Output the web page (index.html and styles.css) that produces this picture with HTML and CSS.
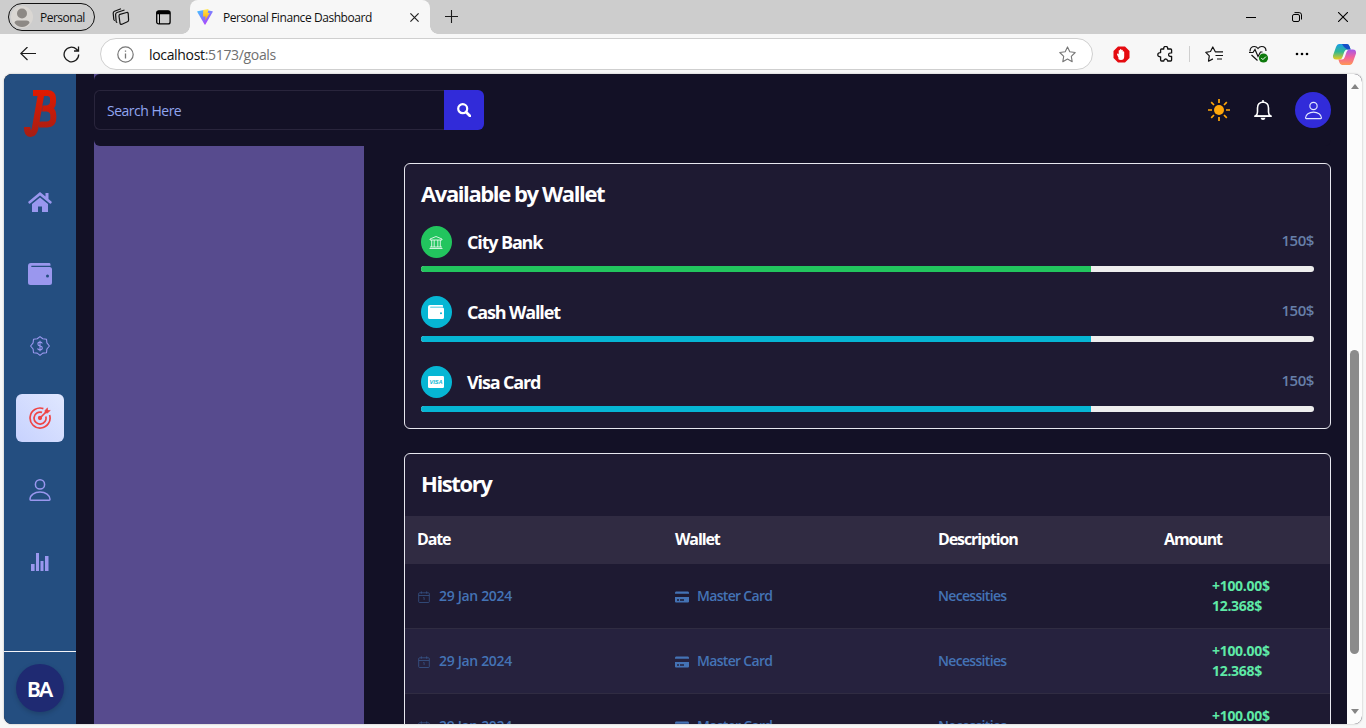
FILE: index.html
```html
<!DOCTYPE html>
<html lang="en">
<head>
<meta charset="utf-8">
<title>Personal Finance Dashboard</title>
<link rel="stylesheet" href="styles.css">
</head>
<body>
<svg class="defs" width="0" height="0">
  <defs>
    <symbol id="person" viewBox="0 0 24 24"><g fill="none" stroke="currentColor" stroke-width="1.500"><circle cx="12" cy="6.400" r="4.600"/><path d="M2.800 22.200c-.5 0-.8-.4-.8-.9 0-4 4.500-7.300 10-7.300s10 3.300 10 7.300c0 .5-.3.900-.8.900z"/></g></symbol>
    <symbol id="wallet" viewBox="0 0 24 22"><path fill="currentColor" fill-rule="evenodd" d="M3 0h18.500q1 0 1 1.500v1.200H3.500q-.6.600 0 1.200H22q2 .2 2 2.200V19.500q0 2.500-2.500 2.500H2.500Q0 22 0 19.500V3Q0 0 3 0zM19.500 11.500a1.500 1.500 0 1 0 0 3 1.500 1.500 0 0 0 0-3z"/></symbol>
    <symbol id="calendar" viewBox="0 0 12 12"><path fill="none" stroke="currentColor" stroke-width=".8" d="M1.500 1.800h9q.8 0 .8.800v8q0 .9-.8.900h-9q-.8 0-.8-.9v-8q0-.8.800-.8zM.7 4.500h10.600M3.300.3v2.400M8.700.3v2.400M5.400 6.500h.7v2.400"/></symbol>
    <symbol id="card" viewBox="0 0 14 12"><path fill="currentColor" fill-rule="evenodd" d="M1 .5h12q1 0 1 1.500v.8H0V2Q0 .5 1 .5zM0 6h14v4.500q0 1-1 1H1q-1 0-1-1zM2 8.300v1.500h2V8.300zm3 0v1.500h4V8.300z"/></symbol>
  </defs>
</svg>

<div class="browser">
  <div class="tabstrip">
    <div class="profile">
      <svg width="22" height="22" viewBox="0 0 22 22"><circle cx="11" cy="11" r="11" fill="#dad7d3"/><circle cx="11" cy="7.500" r="5" fill="#8d8985"/><path d="M3.500 17q0-2.500 3-2.500h9q3 0 3 2.500-3 4-7.500 4t-7.500-4z" fill="#8d8985"/></svg>
      <span>Personal</span>
    </div>
    <svg class="workspaces" width="18" height="18" viewBox="0 0 18 18" fill="none" stroke="#111" stroke-width="1.200"><path d="M8 6.300 14.600 4.500q1.300-.3 1.600.9l.4 6.600q0 1.300-1.200 1.700l-5.400 2.500q-1.800.5-2-1L7 8q0-1.300 1-1.700zM5.300 14.500q-1 0-1.200-1.200L3.600 6.500q0-1.500 1.400-2L12.500 2M3 12.500q-1 0-1.200-1L1.200 5.300q0-1.400 1.300-2L9 .8"/></svg>
    <svg class="tabmenu" width="15" height="15" viewBox="0 0 15 15"><rect x=".7" y=".9" width="13.400" height="13" rx="2" fill="none" stroke="#000" stroke-width="1.300"/><path d="M.7 4.300V2.700Q.7.700 2.700.7h9.400q2 0 2 2v1.600z"/><path d="M3.500 4v10" stroke="#000" stroke-width="1"/></svg>
    <div class="tab">
      <svg width="16" height="16" viewBox="0 0 16 16"><defs><linearGradient id="v1" x1="0" y1="0" x2=".7" y2="1"><stop stop-color="#41c7ff"/><stop offset="1" stop-color="#b638fd"/></linearGradient><linearGradient id="v2" x1="0" y1="0" x2="0" y2="1"><stop stop-color="#ffe64d"/><stop offset="1" stop-color="#ffa800"/></linearGradient></defs><path d="M.5 2.200 7 1h2l6.500 1.200q.5.300.2.900L8.400 15.500q-.4.500-.8 0L.3 3.100Q0 2.400.5 2.200z" fill="url(#v1)"/><path d="M6.200 1 11.500 0 10.700 4h2L8.200 11.500 8.600 7.500H6z" fill="url(#v2)"/></svg>
      <span class="tabtitle">Personal Finance Dashboard</span>
      <svg class="tabclose" width="9" height="9" viewBox="0 0 9 9"><path d="M.4.4l8.200 8.200M8.600.4.400 8.600" stroke="#222" stroke-width="1.200"/></svg>
    </div>
    <svg class="newtab" width="14" height="14" viewBox="0 0 14 14"><path d="M6.500 0v13M0 6.500h13" stroke="#1b1b1b" stroke-width="1.100"/></svg>
    <div class="winbuttons">
      <svg width="10" height="10" viewBox="0 0 10 10"><path d="M0 5.500h10" stroke="#000"/></svg>
      <svg width="10" height="10" viewBox="0 0 10 10" fill="none" stroke="#000"><rect x=".5" y="2.500" width="7" height="7" rx="1.500"/><path d="M2.500.6H7.200q2.300 0 2.300 2.300v4.600"/></svg>
      <svg width="10" height="10" viewBox="0 0 10 10"><path d="M0 0l10 10M10 0 0 10" stroke="#000" stroke-width="1.100"/></svg>
    </div>
  </div>

  <div class="toolbar">
    <svg class="back" width="16" height="14" viewBox="0 0 16 14" fill="none" stroke="#1b1b1b" stroke-width="1.200"><path d="M16 6.500H1M7.500 0 .8 6.500l6.700 6.500"/></svg>
    <svg class="reload" width="17" height="17" viewBox="0 0 17 17" fill="none" stroke="#1b1b1b" stroke-width="1.300"><path d="M15.700 8.500A7.300 7.300 0 1 1 13.500 3.300L15.300 5M15.500.5V5H11"/></svg>
    <div class="address">
      <svg width="17" height="17" viewBox="0 0 17 17"><circle cx="8.500" cy="8.500" r="7.700" fill="none" stroke="#777" stroke-width="1.200"/><path d="M8.500 7.500v5M8.500 4.500v1.300" stroke="#777" stroke-width="1.300"/></svg>
      <span class="url"><b>localhost</b>:5173/goals</span>
      <svg class="star" width="17" height="17" viewBox="0 0 17 17" fill="none" stroke="#777" stroke-width="1.100" stroke-linejoin="round"><path d="M8.500.9l2.300 4.900 5.400.7-3.900 3.800.9 5.400-4.700-2.600-4.700 2.600.9-5.400L.8 6.500l5.400-.7z"/></svg>
    </div>
    <div class="actions">
      <svg class="adblock" width="17" height="17" viewBox="0 0 17 17"><path d="M5 .5h7L16.500 5v7L12 16.500H5L.5 12V5z" fill="#e50b10"/><path d="M4 8.500q0-1 .7-1t1 1V4.800q.1-.9.700-.9t.6.900V3.900q0-.9.700-.9t.7.900v.7q0-.9.700-.9t.7.900v1.600q0-.9.700-.9t.7.900V10.500q0 3.500-3.200 3.500T5.500 11.800z" fill="#fff"/></svg>
      <svg class="puzzle" width="17" height="17" viewBox="0 0 17 17" fill="none" stroke="#111" stroke-width="1.300" stroke-linejoin="round"><path d="M6.800 3a2 2 0 1 1 3.800 0h3q1 0 1 1v2.900q-3-.2-3 1.800t3 1.800V14q0 1-1 1h-3q-.2-2-1.900-2t-1.900 2H4.600q-1 0-1-1v-3.200q-2.800 0-2.800-2.100t2.800-2.100V4q0-1 1-1z"/></svg>
      <i class="divider"></i>
      <svg class="favs" width="18" height="17" viewBox="0 0 18 17" fill="none" stroke="#111" stroke-width="1.200" stroke-linejoin="round"><path d="M14 5.800h-3.700L7.800 1 5.500 5.500.8 6.300l3.500 3.500-.8 5.400 4.400-2.300M11.500 5.800H18M10.500 9.500H18M12 13h5"/></svg>
      <svg class="health" width="20" height="18" viewBox="0 0 20 18"><path d="M1 6.500Q1 1.500 5.500 1.500 7.500 1.500 9 3.500 10.500 1.500 12.700 1.500 17 1.500 17 6M0 7.500h4l2-3 3 7 2.500-4.500h2M2.500 10l6 5.500" fill="none" stroke="#111" stroke-width="1.200"/><circle cx="14.500" cy="13" r="4.600" fill="#0e7a0d"/><path d="M12.300 13l1.600 1.600 3-3" fill="none" stroke="#fff"/></svg>
      <svg class="dots" width="14" height="4" viewBox="0 0 14 4"><circle cx="2" cy="2" r="1.300"/><circle cx="7" cy="2" r="1.300"/><circle cx="12" cy="2" r="1.300"/></svg>
      <svg class="copilot" width="23" height="21" viewBox="0 0 23 21"><defs><linearGradient id="c1" x1="0" y1="0" x2="0" y2="1"><stop stop-color="#1b9de8"/><stop offset=".5" stop-color="#31b891"/><stop offset="1" stop-color="#eccb1c"/></linearGradient><linearGradient id="c2" x1="0" y1="0" x2="0" y2="1"><stop stop-color="#a458ea"/><stop offset=".5" stop-color="#f2629c"/><stop offset="1" stop-color="#ff9754"/></linearGradient></defs><path d="M6 0h8q2 0 2.800 3l.8 2.500H14q-2 0-2.800 2.500L9.500 13q-.8 2.500-3 2.500H3q-3.500 0-3-4L3 3Q4 0 6 0z" fill="url(#c1)"/><path d="M9 0h5q2 0 2.800 3l.8 2.500H14L11 3z" fill="#164fc7"/><path d="M17 21H9q-2 0-2.800-3l-.8-2.500H9q2 0 2.800-2.500L13.500 8q.8-2.500 3-2.500H20q3.500 0 3 4L20 18q-1 3-3 3z" fill="url(#c2)"/></svg>
    </div>
  </div>

  <div class="viewport">
    <aside class="sidebar">
      <svg class="logo" width="36" height="50" viewBox="0 0 36 50"><defs><linearGradient id="red" gradientUnits="userSpaceOnUse" x1="0" y1="0" x2="0" y2="48"><stop stop-color="#e21a00"/><stop offset="1" stop-color="#a51e14"/></linearGradient></defs><g fill="none" stroke="url(#red)"><path stroke-width="6" d="M9 4H23.500Q29 4.500 29 9.500V13Q29 18.500 23 19.500H17M23 19.500Q29.300 20.500 29.300 26V29.500Q29.300 35 23 35.500H15"/><path stroke-width="6.500" d="M17 6 11.700 36Q10.500 45 6.500 44.800 3 44.500 3.200 38"/></g><path d="M20.500 7 16.200 33" stroke="#244e80" stroke-width=".6" opacity=".6"/></svg>
      <nav>
        <a><svg width="24" height="20" viewBox="0 0 24 20" fill="currentColor"><path d="M12 0 17.500 4.500V1H20.500V7L23.700 9.700Q24 10.600 23 11.500 22.300 12 21.500 11.300L12 3.500 2.500 11.300Q1.700 12 1 11.500 0 10.600.3 9.700z"/><path d="M4 12l8-6.500 8 6.500v8h-6v-5.500h-4V20H4z"/></svg></a>
        <a><svg width="24" height="22"><use href="#wallet"/></svg></a>
        <a><svg width="20" height="20" viewBox="0 0 20 20" fill="none" stroke="currentColor" stroke-width="1.100" stroke-linejoin="round"><path d="M10 .6l2.800 2.200 3.700.4.400 3.700L19.400 10l-2.500 3-.4 3.700-3.700.4L10 19.400l-2.800-2.300-3.700-.4-.4-3.700L.6 10l2.500-3.100.4-3.700 3.700-.4z"/><path d="M12.300 7.500q-.3-1.400-2.300-1.400-2.100 0-2.100 1.800T10 10q2.300.3 2.300 2T10 13.900q-2.200 0-2.400-1.500M10 4.700v10.600"/></svg></a>
        <a class="active"><svg width="22" height="22" viewBox="0 0 22 22" fill="none" stroke="currentColor" stroke-width="1.700"><path d="M14.400 1.600A10 10 0 1 0 20.600 8M13 5.400A6 6 0 1 0 16.800 9.400"/><circle cx="11" cy="11" r="1.300" fill="currentColor"/><path d="M11 11l8-8"/><path d="M16 3.500 18.500.8V3.500H21.300L18.500 6H16z" fill="currentColor" stroke-width=".6"/></svg></a>
        <a><svg width="24" height="24"><use href="#person"/></svg></a>
        <a><svg width="18" height="18" viewBox="0 0 18 18" fill="currentColor"><path d="M0 11h3.600v7H0zM5 0h3v18H5zM9.500 8h3v10h-3zM14 3h3.500v15H14z"/></svg></a>
      </nav>
      <div class="account"><span>BA</span></div>
    </aside>

    <main class="main">
      <div class="topwrap">
      <header class="topbar">
        <div class="search"><span class="field">Search Here</span><span class="searchbtn"><svg width="14" height="14" viewBox="0 0 14 14" fill="none" stroke="#fff"><circle cx="5.700" cy="5.700" r="4.500" stroke-width="2.200"/><path d="M9 9l4 4" stroke-width="2.700" stroke-linecap="round"/></svg></span></div>
        <div class="tools">
          <svg width="22" height="22" viewBox="0 0 22 22"><circle cx="11" cy="11" r="5" fill="#ffa70b"/><path d="M11 0v4M11 18v4M0 11h4M18 11h4M3.200 3.200 6 6M16 16l2.800 2.800M3.200 18.800 6 16M16 6l2.800-2.800" stroke="#ffa70b" stroke-width="1.700"/></svg>
          <svg width="18" height="20" viewBox="0 0 18 20"><path d="M1.500 16q2-1.500 2-4V8q0-5.500 5.500-6 5.500.5 5.500 6v4q0 2.500 2 4z" fill="none" stroke="#fff" stroke-width="1.600" stroke-linejoin="round"/><path d="M9 0v2.500M.2 16.200h17.600" stroke="#fff" stroke-width="1.500"/><path d="M6.500 17.700h5Q11 20 9 20t-2.500-2.300z" fill="#fff"/></svg>
          <span class="avatar"><svg width="19" height="19"><use href="#person"/></svg></span>
        </div>
      </header>
      </div>
      <div class="columns">
        <div class="goalpanel"></div>
        <div class="content">
          <section class="panel wallets">
            <h2>Available by Wallet</h2>
            <div class="wallet green"><div class="line"><span class="badge"><svg width="14" height="13" viewBox="0 0 14 13" fill="none" stroke="currentColor" stroke-width=".8"><path d="M1 4V3l6-2.500L13 3v1zM2.700 4v7M5.200 4v7M8.800 4v7M11.300 4v7M1 11h12M.5 12.500h13"/></svg></span><span class="name">City Bank</span><span class="sum">150$</span></div><div class="track"><i></i></div></div>
            <div class="wallet"><div class="line"><span class="badge"><svg width="16" height="14" viewBox="0 0 24 22" preserveAspectRatio="none"><use href="#wallet" width="24" height="22"/></svg></span><span class="name">Cash Wallet</span><span class="sum">150$</span></div><div class="track"><i></i></div></div>
            <div class="wallet"><div class="line"><span class="badge"><svg width="16" height="12" viewBox="0 0 16 12"><rect width="16" height="12" rx="1.200" fill="#fff"/><text x="1.500" y="8.200" class="visa" textLength="13" lengthAdjust="spacingAndGlyphs">VISA</text></svg></span><span class="name">Visa Card</span><span class="sum">150$</span></div><div class="track"><i></i></div></div>
          </section>
          <section class="panel history">
            <h2>History</h2>
            <div class="row head"><span>Date</span><span>Wallet</span><span>Description</span><span class="amt">Amount</span></div>
            <div class="row"><span class="date"><svg width="12" height="12"><use href="#calendar"/></svg><em>29 Jan 2024</em></span><span class="via"><svg width="14" height="12"><use href="#card"/></svg><em>Master Card</em></span><em>Necessities</em><span class="money">+100.00$<br>12.368$</span></div>
            <div class="row alt"><span class="date"><svg width="12" height="12"><use href="#calendar"/></svg><em>29 Jan 2024</em></span><span class="via"><svg width="14" height="12"><use href="#card"/></svg><em>Master Card</em></span><em>Necessities</em><span class="money">+100.00$<br>12.368$</span></div>
            <div class="row"><span class="date"><svg width="12" height="12"><use href="#calendar"/></svg><em>29 Jan 2024</em></span><span class="via"><svg width="14" height="12"><use href="#card"/></svg><em>Master Card</em></span><em>Necessities</em><span class="money">+100.00$<br>12.368$</span></div>
          </section>
        </div>
      </div>
    </main>
    <div class="scrollbar"><i class="up"></i><i class="thumb"></i><i class="down"></i></div>
  </div>
</div>
</body>
</html>
```
FILE: styles.css
```css
* { box-sizing: border-box; }
body { margin: 0; overflow: hidden; font-family: "Open Sans", "Noto Sans", sans-serif; }
svg { display: block; flex: none; }
.defs { display: none; }
.browser { width: 1366px; height: 728px; background: #f7f7f7; overflow: hidden; display: flex; flex-direction: column; }

/* Tab strip */
.tabstrip { height: 34px; background: #cdcdcd; display: flex; align-items: center; flex: none; }
.profile { margin-left: 8px; width: 87px; height: 28px; border: 1px solid #111; border-radius: 14px; display: flex; align-items: center; gap: 7px; padding-left: 2px; font-size: 12px; letter-spacing: -.5px; color: #111; }
.workspaces { margin-left: 17px; }
.tabmenu { margin-left: 26px; }
.tab { margin-left: 19px; width: 240px; height: 34px; background: #f7f7f7; border-radius: 8px 8px 0 0; display: flex; align-items: center; padding-left: 7px; position: relative; }
.tab::before, .tab::after { content: ""; position: absolute; bottom: 0; width: 8px; height: 8px; }
.tab::before { left: -8px; background: radial-gradient(circle at 0 0, #cdcdcd 7.5px, #f7f7f7 8px); }
.tab::after { right: -8px; background: radial-gradient(circle at 100% 0, #cdcdcd 7.5px, #f7f7f7 8px); }
.tabtitle { margin-left: 10px; width: 187px; font-size: 12px; letter-spacing: -.43px; white-space: nowrap; color: #111; }
.newtab { margin-left: 15px; }
.winbuttons { margin-left: auto; margin-right: 18px; display: flex; gap: 36px; }

/* Toolbar */
.toolbar { height: 40px; display: flex; align-items: center; flex: none; }
.back { margin-left: 20px; }
.reload { margin-left: 27px; }
.address { margin-left: 20px; width: 993px; height: 32px; border: 1px solid #cfcfcf; border-radius: 16px; background: #fff; display: flex; align-items: center; padding: 0 16px; }
.url { margin-left: 15px; font-size: 14px; letter-spacing: -.33px; color: #707070; }
.url b { font-weight: 400; color: #111; }
.star { margin-left: auto; }
.actions { display: flex; align-items: center; flex: 1; }
.adblock { margin-left: 20px; }
.puzzle { margin-left: 27px; }
.divider { width: 1px; height: 16px; background: #cfcfcf; margin-left: 15px; }
.favs { margin-left: 15px; }
.health { margin-left: 26px; }
.dots { margin-left: 26px; }
.copilot { margin-left: 24px; }

/* Page */
.viewport { margin: 0 4px; height: 650px; border-radius: 8px; overflow: hidden; background: #131126; display: flex; flex: none; box-shadow: 0 0 2px #aaa; }
.sidebar { width: 72px; background: #244e80; display: flex; flex-direction: column; flex: none; }
.logo { margin: 15px 0 0 20px; overflow: visible; }
nav { margin-top: 39px; display: flex; flex-direction: column; align-items: center; gap: 24px; }
nav a { width: 48px; height: 48px; border-radius: 6px; display: flex; align-items: center; justify-content: center; color: #9a97ee; }
.active { color: #ef4444; background: linear-gradient(45deg, #c7d2fe, #e0e7ff); }
.account { margin-top: auto; height: 73px; border-top: 1px solid #f4f4f8; padding: 12px; }
.account span { width: 48px; height: 48px; border-radius: 50%; background: #1f2a72; color: #fff; display: flex; align-items: center; justify-content: center; font: 900 20px Lato, sans-serif; letter-spacing: -1.2px; padding: 1px 1px 0 0; box-shadow: 0 2px 5px rgba(0,0,0,.18); }

.main { width: 1271px; padding-left: 18px; flex: none; }
.topwrap { background: linear-gradient(90deg, #574b8e 20px, #131126 20px); }
.topbar { height: 72px; width: 1237px; border-radius: 6px; background: #131126; display: flex; align-items: center; }
.search { display: flex; width: 390px; height: 40px; }
.field { flex: 1; border: 1px solid #29253c; border-right: 0; border-radius: 6px 0 0 6px; padding: 0 12px; font-size: 14px; line-height: 40px; letter-spacing: -.5px; color: #91a5f0; }
.searchbtn { width: 40px; border-radius: 0 6px 6px 0; background: #312bd9; display: flex; align-items: center; justify-content: center; }
.tools { margin-left: auto; display: flex; align-items: center; }
.tools > svg + svg { margin-left: 24px; }
.avatar { margin-left: 23px; width: 36px; height: 36px; border-radius: 50%; background: #312bd9; color: #e0e7ff; display: flex; align-items: center; justify-content: center; }

.columns { display: flex; gap: 40px; height: 578px; }
.goalpanel { width: 270px; background: #574b8e; }
.content { width: 927px; padding-top: 17px; display: flex; flex-direction: column; gap: 24px; }
.panel { border: 1px solid #e7e7ef; border-radius: 6px; background: #1e1a32; flex: none; }
h2 { margin: 0; font-size: 22px; line-height: 27px; height: 30px; font-weight: 700; letter-spacing: -1.4px; color: #fff; }
.wallets { padding: 16px; height: 266px; }
.wallet { margin-top: 24px; color: #06b6d4; }
.wallet.green { margin-top: 16px; color: #22c55e; }
.line { height: 32px; display: flex; align-items: center; }
.badge { width: 31px; height: 32px; border-radius: 50%; background: currentColor; display: flex; align-items: center; justify-content: center; padding-right: 1px; }
.badge svg { color: #fff; }
.visa { font: italic 700 6px "Liberation Sans", sans-serif; fill: #06b6d4; }
.name { margin-left: 15px; font-size: 18px; font-weight: 700; letter-spacing: -1.15px; color: #fff; }
.sum { margin-left: auto; padding-bottom: 4px; font-size: 15px; font-weight: 600; letter-spacing: -.45px; color: #667fa8; }
.track { margin-top: 8px; height: 6px; border-radius: 3px; background: #eee; overflow: hidden; }
.track i { display: block; width: 75%; height: 6px; background: #06b6d4; }
.green .track i { background: #22c55e; }

.history { height: 340px; overflow: hidden; }
.history h2 { padding: 16px; height: 62px; }
.row { height: 65px; display: grid; grid-template-columns: 258px 263px 226px 178px; align-items: center; padding-left: 12px; border-bottom: 1px solid #302c42; font-size: 14px; letter-spacing: -.68px; color: #4473b5; font-weight: 600; }
.row em { font-style: normal; padding-bottom: 1px; }
.row .date { letter-spacing: -.33px; }
.row.alt { background: #26223e; }
.row.head { height: 48px; background: #302b42; border: 0; color: #fff; font-size: 16px; font-weight: 700; letter-spacing: -1.12px; padding-bottom: 2px; }
.date, .via { display: flex; align-items: center; }
.date svg { margin: 2px 9px 0 1px; opacity: .65; }
.via svg { margin: 2px 8px 0 0; }
.money { padding-left: 48px; line-height: 20px; font-weight: 700; letter-spacing: -.3px; color: #5ee9a6; }

.scrollbar { width: 15px; background: #fcfcfc; display: flex; flex-direction: column; align-items: center; }
.up, .down { border: 4.5px solid transparent; width: 0; height: 0; }
.up { margin-top: 6px; border-bottom: 5px solid #858585; }
.thumb { margin-top: 261px; width: 9px; height: 304px; border-radius: 5px; background: #8b8b8b; }
.down { margin-top: 55px; border-top: 5px solid #858585; }
```
